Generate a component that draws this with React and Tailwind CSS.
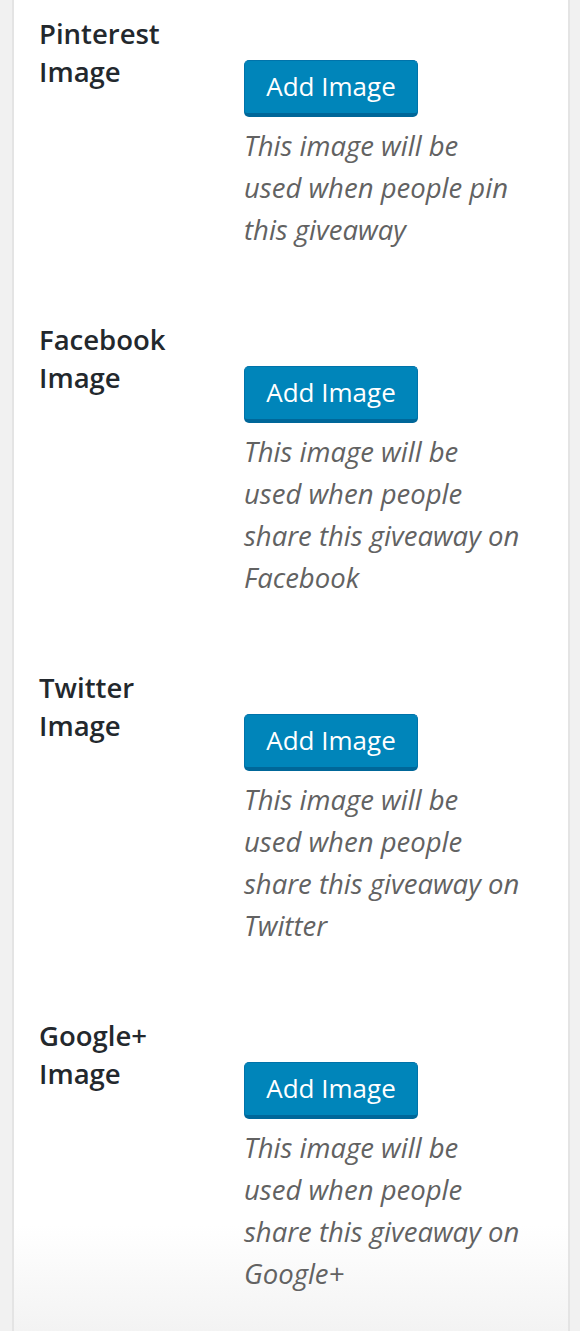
import React from 'react';

const sections = [
  { label: ['Pinterest', 'Image'], desc: ['This image will be', 'used when people pin', 'this giveaway'] },
  { label: ['Facebook', 'Image'], desc: ['This image will be', 'used when people', 'share this giveaway on', 'Facebook'] },
  { label: ['Twitter', 'Image'], desc: ['This image will be', 'used when people', 'share this giveaway on', 'Twitter'] },
  { label: ['Google+', 'Image'], desc: ['This image will be', 'used when people', 'share this giveaway on', 'Google+'] },
];

const ImageRow = ({ label, desc }) => {
  return (
    <div className="flex pb-[55px]">
      <div className="w-[205px] shrink-0 pt-[15px] text-[27.5px] leading-[38px] font-semibold text-[#23282d]">
        {label.map((l) => (
          <div key={l}>{l}</div>
        ))}
      </div>
      <div className="pt-[60px]">
        <button
          type="button"
          className="w-[174px] h-[57px] rounded-[5px] bg-[#0085ba] border border-[#0073aa] border-b-[4px] border-b-[#006799] text-white text-[26px] leading-none pb-[2px]"
        >
          Add Image
        </button>
        <div className="mt-[8px] text-[27.5px] leading-[42px] italic text-[#626262] whitespace-nowrap">
          {desc.map((d, i) => (
            <div key={i}>{d}</div>
          ))}
        </div>
      </div>
    </div>
  );
};

export default function App() {
  return (
    <div
      className="h-[1331px] w-[580px] overflow-hidden bg-[#f1f1f1] pl-[12px] pr-[10px]"
      style={{ fontFamily: '"Open Sans", "Noto Sans", sans-serif' }}
    >
      <div className="h-full border-l-2 border-r-2 border-[#e4e4e4] bg-[linear-gradient(to_bottom,#ffffff_1225px,#f3f3f3_1331px)] pl-[25px]">
        {sections.map((s) => (
          <ImageRow key={s.label[0]} label={s.label} desc={s.desc} />
        ))}
      </div>
    </div>
  );
}
